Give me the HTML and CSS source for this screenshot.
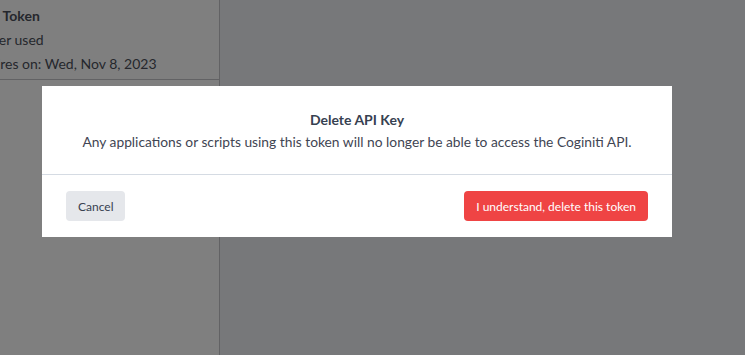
FILE: index.html
```html
<!DOCTYPE html>
<html lang="en">
<head>
<meta charset="utf-8">
<title>Delete API Key</title>
<link rel="stylesheet" href="styles.css">
</head>
<body>
<div class="page">
  <aside class="side">
    <div class="token">
      <div class="token-inner">
        <div class="token-name">Test Token</div>
        <div class="token-meta">Never used</div>
        <div class="token-meta">Expires on: Wed, Nov 8, 2023</div>
      </div>
    </div>
  </aside>
  <main class="main"></main>
</div>
<div class="overlay">
  <div class="modal" role="dialog">
    <div class="modal-body">
      <div class="modal-title">Delete API Key</div>
      <div class="modal-text">Any applications or scripts using this token will no longer be able to access the Coginiti API.</div>
    </div>
    <div class="modal-footer">
      <button class="btn btn-cancel">Cancel</button>
      <button class="btn btn-danger">I understand, delete this token</button>
    </div>
  </div>
</div>
</body>
</html>
```
FILE: styles.css
```css
* { box-sizing: border-box; }
html, body { margin: 0; height: 100%; }
body {
  font-family: Lato, "Open Sans", sans-serif;
  color: #374151;
  overflow: hidden;
}
.page {
  display: flex;
  height: 100vh;
}
.side {
  width: 220px;
  flex: none;
  background: #ffffff;
  border-right: 1px solid #c4c5c9;
  overflow: hidden;
}
.token {
  border-bottom: 1px solid #c4c5c9;
  height: 80px;
}
.token-inner {
  margin-left: -42px;
  padding: 4px 16px 0;
  white-space: nowrap;
}
.token-name {
  font-weight: 700;
  font-size: 14px;
  line-height: 24px;
  color: #4b4f5a;
}
.token-meta {
  font-size: 14px;
  line-height: 24px;
  color: #4b4f5a;
}
.main {
  flex: 1;
  background: #eff0f4;
}
.overlay {
  position: fixed;
  inset: 0;
  background: rgba(0, 0, 0, 0.5);
  padding: 86px 0 0 42px;
}
.modal {
  width: 630px;
  background: #ffffff;
}
.modal-body {
  padding: 24px 24px 22px;
  text-align: center;
}
.modal-title {
  font-size: 14px;
  font-weight: 700;
  line-height: 20px;
  color: #374151;
}
.modal-text {
  margin-top: 2px;
  font-size: 13.8px;
  line-height: 20px;
  color: #3f4553;
}
.modal-footer {
  border-top: 1px solid #d5dbe3;
  padding: 16px 24px;
  display: flex;
  justify-content: space-between;
}
.btn {
  font-family: inherit;
  font-size: 12px;
  height: 30px;
  border: none;
  border-radius: 4px;
  padding: 0 12px;
  cursor: pointer;
}
.btn-cancel {
  background: #e5e7eb;
  color: #374151;
}
.btn-danger {
  background: #ef4444;
  color: #ffffff;
}
```
